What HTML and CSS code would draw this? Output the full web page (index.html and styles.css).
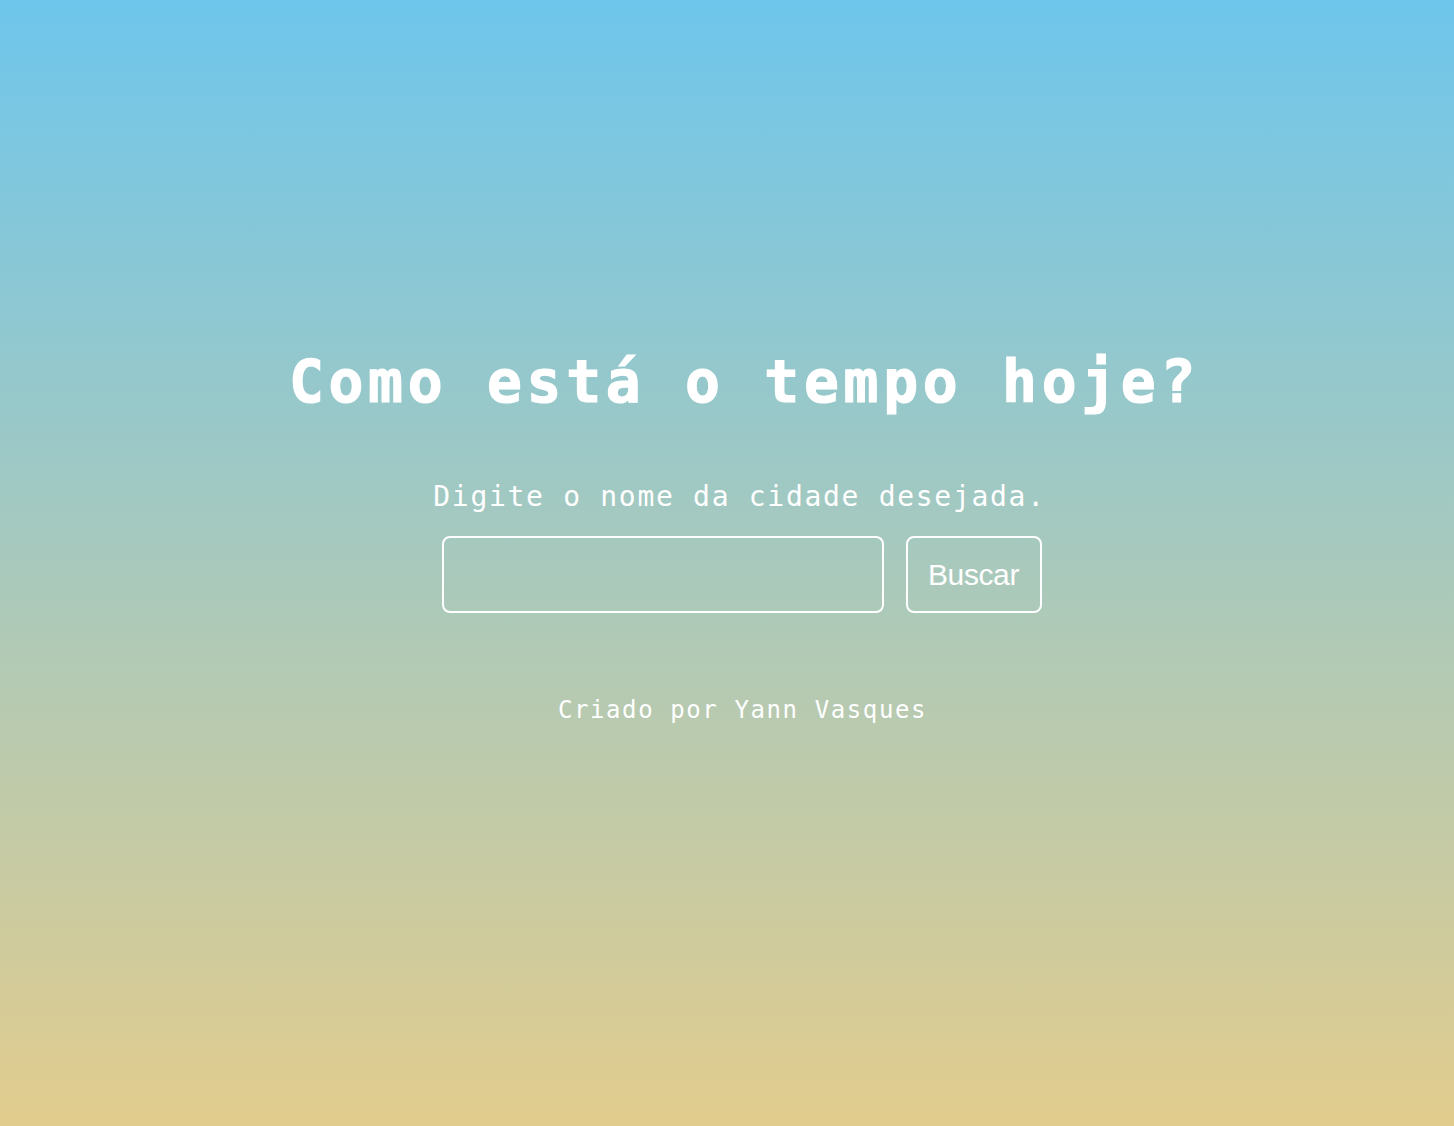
FILE: index.html
```html
<!DOCTYPE html>
<html lang="pt-BR">
<head>
<meta charset="utf-8">
<title>Como está o tempo hoje?</title>
<link rel="stylesheet" href="styles.css">
</head>
<body>
<main class="page">
  <h1 class="title">Como está o tempo hoje?</h1>
  <p class="subtitle">Digite o nome da cidade desejada.</p>
  <form class="search">
    <input class="search-input" type="text" aria-label="Cidade">
    <button class="search-button" type="button">Buscar</button>
  </form>
  <footer class="credit">Criado por Yann Vasques</footer>
</main>
</body>
</html>
```

FILE: styles.css
```css
html, body {
  margin: 0;
  padding: 0;
  height: 100%;
}

body {
  background: linear-gradient(180deg, #6ec6ec 0%, #e2cc8d 100%);
  color: #ffffff;
  font-family: "DejaVu Sans Mono", "Liberation Mono", monospace;
}

.page {
  box-sizing: border-box;
  min-height: 100vh;
  display: flex;
  flex-direction: column;
  align-items: center;
  padding: 342px 0 0 29px;
}

.title {
  margin: 0 0 0 6px;
  font-size: 58px;
  line-height: 80px;
  font-weight: bold;
  letter-spacing: 4.7px;
  -webkit-text-stroke: 1.2px #ffffff;
}

.subtitle {
  margin: 55px 0 0 -4px;
  font-size: 28px;
  line-height: 40px;
  letter-spacing: 1.7px;
}

.search {
  margin-top: 19px;
  display: flex;
  gap: 22px;
}

.search-input {
  box-sizing: border-box;
  width: 442px;
  height: 77px;
  background: transparent;
  border: 2px solid #ffffff;
  border-radius: 8px;
  color: #ffffff;
  font-size: 24px;
  padding: 0 16px;
  outline: none;
}

.search-button {
  box-sizing: border-box;
  width: 136px;
  height: 77px;
  background: transparent;
  border: 2px solid #ffffff;
  border-radius: 8px;
  color: #ffffff;
  font-family: "Liberation Sans", Arial, sans-serif;
  font-size: 30px;
  letter-spacing: -0.4px;
  padding: 0;
  cursor: pointer;
}

.credit {
  margin-top: 82px;
  margin-left: 2px;
  font-size: 24px;
  line-height: 30px;
  letter-spacing: 1.6px;
}
```
